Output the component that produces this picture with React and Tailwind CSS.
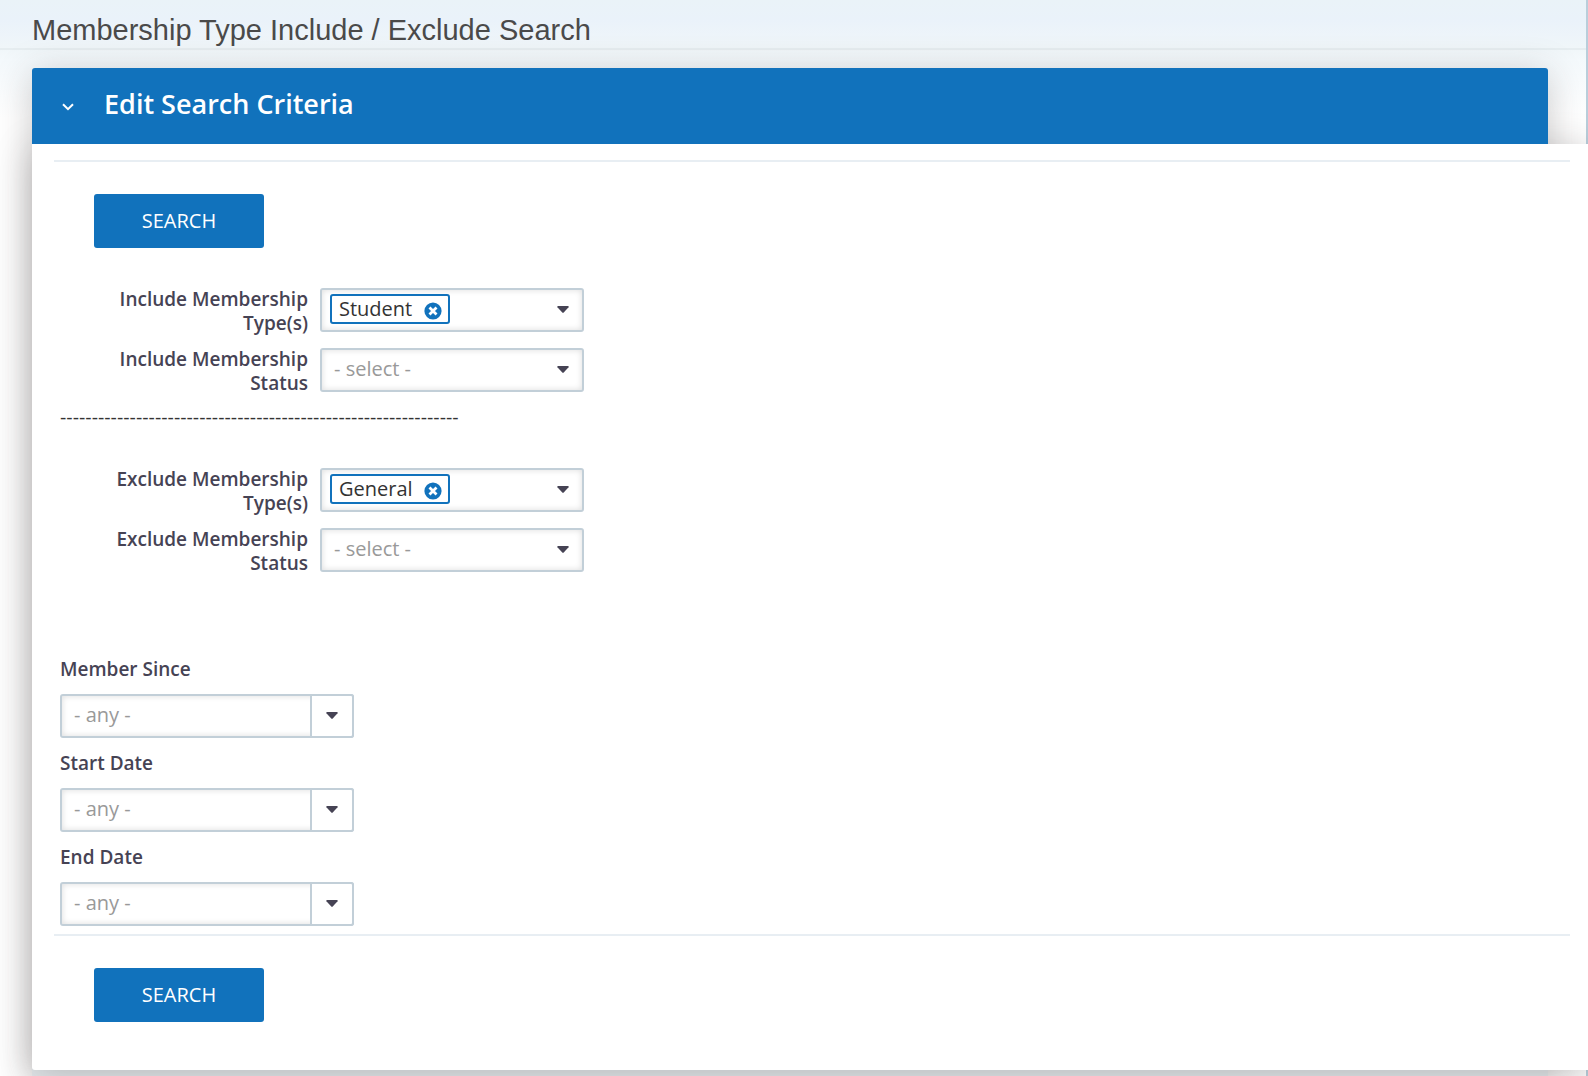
import React from "react";

const fieldBox =
  "rounded-[3px] border-2 border-[#c2cfd8] bg-white shadow-[inset_0_0_6px_rgba(0,0,0,0.14)]";

function Caret() {
  return (
    <svg viewBox="0 0 12 7" className="h-[7px] w-3" fill="#464354" aria-hidden="true">
      <path d="M1 0h10a.8.8 0 0 1 .6 1.3L6.7 6.6a1 1 0 0 1-1.4 0L.4 1.3A.8.8 0 0 1 1 0z" />
    </svg>
  );
}

function SearchButton() {
  return (
    <button
      type="submit"
      className="ml-10 mt-8 block h-[54px] w-[170px] rounded-[3px] bg-[#1172bc] text-[20px] leading-6 text-white"
    >
      SEARCH
    </button>
  );
}

function Row({ id, label, children }) {
  return (
    <div className="flex h-12 items-center gap-3">
      <label htmlFor={id} className="w-[248px] pt-0.5 text-right text-[19px] font-semibold">
        <span className="block">{label[0]} </span>
        <span className="block">{label[1]}</span>
      </label>
      {children}
    </div>
  );
}

function TagField({ id, value }) {
  return (
    <div className={`${fieldBox} flex h-11 w-[264px] items-center pb-0.5 pl-2`}>
      <span className="flex h-[30px] w-[120px] shrink-0 items-center justify-between rounded-[3px] border-2 border-[#1172bc] bg-white pl-[7px] pr-1.5 text-[#333]">
        <span>{value}</span>
        <button type="button" aria-label={`Remove ${value}`}>
          <svg viewBox="0 0 18 18" className="mt-1 h-[18px] w-[18px]" aria-hidden="true">
            <circle cx="9" cy="9" r="8.6" fill="#1172bc" />
            <path d="M5.5 5.5l7 7M12.5 5.5l-7 7" stroke="#fff" strokeWidth="2.8" />
          </svg>
        </button>
      </span>
      <input id={id} type="text" className="min-w-0 flex-1 bg-transparent outline-none" />
      <button type="button" aria-label="Show options" className="mr-[13px] shrink-0">
        <Caret />
      </button>
    </div>
  );
}

function StatusSelect({ id }) {
  return (
    <div className="relative h-11 w-[264px]">
      <select
        id={id}
        className={`${fieldBox} h-full w-full appearance-none pb-0.5 pl-3 text-[#999]`}
      >
        <option>- select -</option>
      </select>
      <span className="pointer-events-none absolute inset-y-0 right-[15px] flex items-center pb-0.5">
        <Caret />
      </span>
    </div>
  );
}

function DateField({ id, label }) {
  return (
    <div>
      <label htmlFor={id} className="block text-[19px] font-semibold">
        {label}
      </label>
      <div className="relative mt-[13px] h-11 w-[294px]">
        <select
          id={id}
          className={`${fieldBox} h-full w-full appearance-none pb-0.5 pl-3 text-[#999]`}
        >
          <option>- any -</option>
        </select>
        <span className="pointer-events-none absolute inset-y-0 right-0 flex w-11 items-center justify-center rounded-r-[3px] border-2 border-[#c2cfd8] bg-white pb-0.5">
          <Caret />
        </span>
      </div>
    </div>
  );
}

export default function App() {
  return (
    <div className="flex min-h-screen flex-col overflow-hidden bg-white bg-[linear-gradient(to_left,#b9cedb_2px,transparent_2px),linear-gradient(#eaf3f8_0px,#eaf2fa_20px,#f0f6f9_48px,#f4f9fc_60px,#ffffff_118px)] font-['Open_Sans',sans-serif] text-[20px] leading-6 text-[#464354]">
      <h1 className="mr-0.5 h-[50px] border-b-2 border-[#e6edf0] pl-8 pt-3 font-['Liberation_Sans',Arial,sans-serif] text-[29px] leading-9 text-[#4a4a4a]">
        Membership Type Include / Exclude Search
      </h1>

      <main className="ml-8 mr-10 mt-[18px] flex-1 rounded-t-[3px] bg-[#e4e9ec] pb-[6px] shadow-[0_6px_36px_rgba(48,40,40,0.25)]">
        <h2 className="relative z-10">
          <button
            type="button"
            aria-expanded="true"
            className="flex h-[76px] w-full items-center rounded-t-[3px] bg-[#1172bc] pb-1 pl-[30px] text-left text-[27px] font-semibold leading-9 text-white"
          >
            <svg viewBox="0 0 12 8" className="mr-[30px] mt-1.5 h-2 w-3" fill="none" aria-hidden="true">
              <path d="M1 1.2l5 5 5-5" stroke="#fff" strokeWidth="2" />
            </svg>
            Edit Search Criteria
          </button>
        </h2>

        <form
          onSubmit={(e) => e.preventDefault()}
          className="-mr-11 rounded-b-[3px] bg-white px-[22px] pb-12 pt-4 shadow-[0_6px_36px_rgba(48,40,40,0.25)]"
        >
          <hr className="border-t-2 border-[#e8eef3]" />
          <SearchButton />

          <div className="ml-[6px] mt-[38px]">
            <div className="flex flex-col gap-3">
              <Row id="include-types" label={["Include Membership", "Type(s)"]}>
                <TagField id="include-types" value="Student" />
              </Row>
              <Row id="include-status" label={["Include Membership", "Status"]}>
                <StatusSelect id="include-status" />
              </Row>
            </div>
            <p className="mt-3 font-['Liberation_Sans',Arial,sans-serif] text-[19px] text-[#333]">
              ---------------------------------------------------------------
            </p>
            <div className="mt-9 flex flex-col gap-3">
              <Row id="exclude-types" label={["Exclude Membership", "Type(s)"]}>
                <TagField id="exclude-types" value="General" />
              </Row>
              <Row id="exclude-status" label={["Exclude Membership", "Status"]}>
                <StatusSelect id="exclude-status" />
              </Row>
            </div>
            <div className="mt-[83px] flex flex-col gap-[13px]">
              <DateField id="member-since" label="Member Since" />
              <DateField id="start-date" label="Start Date" />
              <DateField id="end-date" label="End Date" />
            </div>
          </div>

          <hr className="mt-2 border-t-2 border-[#e8eef3]" />
          <SearchButton />
        </form>
      </main>
    </div>
  );
}
